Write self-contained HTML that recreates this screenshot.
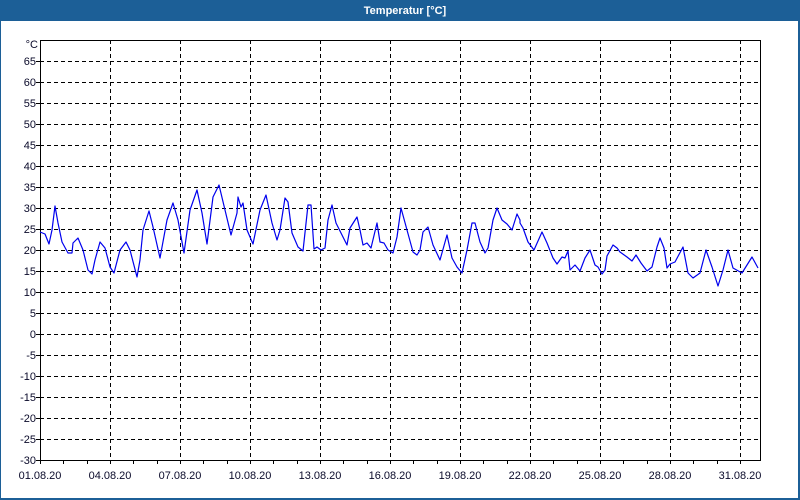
<!DOCTYPE html>
<html><head><meta charset="utf-8"><style>
body{margin:0;width:800px;height:500px;overflow:hidden;background:#fff}
svg{display:block}
text{font-family:"Liberation Sans",sans-serif;font-size:11px;fill:#0a0a2a}
</style></head><body>
<svg width="800" height="500" xmlns="http://www.w3.org/2000/svg">
<rect x="0" y="0" width="800" height="500" fill="#1c5f97"/>
<rect x="1" y="21" width="797" height="477" fill="#fff"/>
<text x="405" y="14" text-anchor="middle" style="fill:#fff;font-weight:bold;font-size:11px">Temperatur [°C]</text>
<g stroke="#000" stroke-width="1" stroke-dasharray="4,3" shape-rendering="crispEdges">
<path d="M40 61.5H760M40 82.5H760M40 103.5H760M40 124.5H760M40 145.5H760M40 166.5H760M40 187.5H760M40 208.5H760M40 229.5H760M40 250.5H760M40 271.5H760M40 292.5H760M40 313.5H760M40 334.5H760M40 355.5H760M40 376.5H760M40 397.5H760M40 418.5H760M40 439.5H760"/>
<path d="M110.5 40V460M180.5 40V460M250.5 40V460M320.5 40V460M390.5 40V460M460.5 40V460M530.5 40V460M600.5 40V460M670.5 40V460M740.5 40V460"/>
</g>
<rect x="40.5" y="40.5" width="720" height="420" fill="none" stroke="#000" stroke-width="1" shape-rendering="crispEdges"/>
<g stroke="#000" shape-rendering="crispEdges">
<path d="M40.5 460v4M63.5 460v4M87.5 460v4M110.5 460v4M133.5 460v4M157.5 460v4M180.5 460v4M203.5 460v4M227.5 460v4M250.5 460v4M273.5 460v4M297.5 460v4M320.5 460v4M343.5 460v4M367.5 460v4M390.5 460v4M413.5 460v4M437.5 460v4M460.5 460v4M483.5 460v4M507.5 460v4M530.5 460v4M553.5 460v4M577.5 460v4M600.5 460v4M623.5 460v4M647.5 460v4M670.5 460v4M693.5 460v4M717.5 460v4M740.5 460v4"/>
<path d="M36 61.5h4M36 82.5h4M36 103.5h4M36 124.5h4M36 145.5h4M36 166.5h4M36 187.5h4M36 208.5h4M36 229.5h4M36 250.5h4M36 271.5h4M36 292.5h4M36 313.5h4M36 334.5h4M36 355.5h4M36 376.5h4M36 397.5h4M36 418.5h4M36 439.5h4M36 460.5h4"/>
</g>
<g text-anchor="end">
<text x="38" y="48">°C</text>
<text x="36" y="65">65</text><text x="36" y="86">60</text><text x="36" y="107">55</text><text x="36" y="128">50</text><text x="36" y="149">45</text><text x="36" y="170">40</text><text x="36" y="191">35</text><text x="36" y="212">30</text><text x="36" y="233">25</text><text x="36" y="254">20</text><text x="36" y="275">15</text><text x="36" y="296">10</text><text x="36" y="317">5</text><text x="36" y="338">0</text><text x="36" y="359">-5</text><text x="36" y="380">-10</text><text x="36" y="401">-15</text><text x="36" y="422">-20</text><text x="36" y="443">-25</text><text x="36" y="464">-30</text>
</g>
<g text-anchor="middle">
<text x="40" y="479">01.08.20</text><text x="110" y="479">04.08.20</text><text x="180" y="479">07.08.20</text><text x="250" y="479">10.08.20</text><text x="320" y="479">13.08.20</text><text x="390" y="479">16.08.20</text><text x="460" y="479">19.08.20</text><text x="530" y="479">22.08.20</text><text x="600" y="479">25.08.20</text><text x="670" y="479">28.08.20</text><text x="740" y="479">31.08.20</text>
</g>
<polyline fill="none" stroke="#0000ee" stroke-width="1.2" stroke-linejoin="round" points="
40,232 45,234 49,244 52,230 55,206 58,223 62,242 68,253 72,253 73,243 78,238 83,250 88,270 92,274 95,260 100,242 105,248 110,267 114,273 120,250 126,242 130,250 137,277 140,260 143,230 149,211 153,227 160,258 167,220 173,203 178,220 184,253 190,210 197,190 202,213 207,244 213,197 219,185 225,210 231,235 237,213 238,197 241,207 243,203 247,230 253,244 260,210 266,195 272,223 277,240 280,230
285,198 288,202 292,233 298,247 303,251 308,205 311,205 314,249 317,247 321,250 325,248 328,220 332,205 336,223 343,237 347,245 350,228 357,217 360,230 363,245 367,243 371,248 377,223 380,242 384,243 388,250 393,253 397,237 401,208 407,230 413,252 417,255 420,250 423,232 428,227 433,245 440,260 447,235 452,258 457,267 462,273 467,250 472,223 475,223 480,242 485,253 488,248 493,220 497,208 502,220 507,224 512,230 517,214 520,220
520,223 523,228 528,242 534,250 542,232 547,243 553,258 557,264 562,257 565,258 568,251 570,270 575,265 580,271 585,258 590,250 595,265 598,267 602,274 605,270 607,256 613,245 617,248 620,252 627,257 632,261 636,255 641,263 647,271 652,267 657,247 660,238 664,248 667,268 670,264 675,262 683,247 688,273 693,278 700,273 706,250 712,267 718,286 723,270 728,250 733,268 742,273 752,257 758,268"/>
</svg>
</body></html>
